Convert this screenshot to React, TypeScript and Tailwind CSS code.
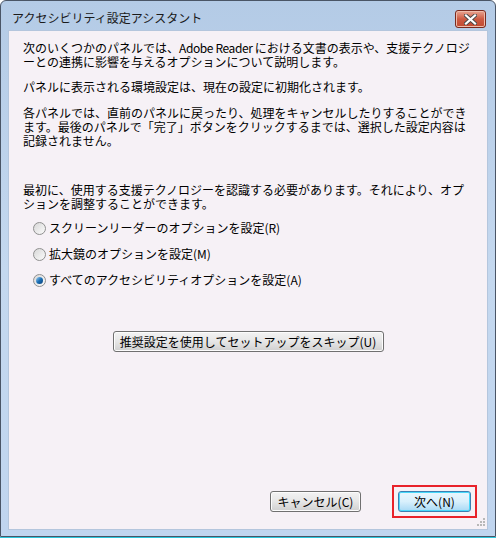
import React from "react";

const font = { fontFamily: '"Noto Sans CJK JP", "Noto Sans", sans-serif' };

const Radio = ({ checked, label }: { checked?: boolean; label: string }) => (
  <div className="flex items-center h-[14px]">
    <span className="w-[13px] h-[13px] rounded-full border border-[#8f8f8f] bg-gradient-to-br from-[#d8d8d8] to-[#fbfbfb] flex items-center justify-center">
      {checked && (
        <span className="w-[7px] h-[7px] rounded-full bg-gradient-to-br from-[#9bd3f4] via-[#1a6fb5] to-[#0d3f78]" />
      )}
    </span>
    <span className="ml-[3px] whitespace-nowrap">{label}</span>
  </div>
);

const Button = ({ children, className }: { children: React.ReactNode; className?: string }) => (
  <button
    className={`h-[21px] rounded-[3px] border border-[#707070] bg-gradient-to-b from-[#f3f3f3] via-[#e6e6e6] to-[#d0d0d0] text-[12px] leading-[14px] text-black flex items-center justify-center shadow-[inset_0_0_0_1px_#fcfcfc] ${className ?? ""}`}
    style={font}
  >
    {children}
  </button>
);

export default function App() {
  return (
    <div className="w-[496px] h-[538px] bg-white" style={font}>
      <div className="h-[537px] flex flex-col rounded-t-[6px] border border-[#4a5566] bg-gradient-to-b from-[#b4cbe6] via-[#c4d8ef] to-[#c0d5ef] overflow-hidden">
        {/* title bar */}
        <div className="h-[29px] flex items-start shrink-0">
          <div className="pl-[11px] pt-[9px] text-[12px] leading-[16px] text-[#1a1a1a] flex-1">アクセシビリティ設定アシスタント</div>
          <div className="mt-[9px] mr-[9px] w-[31px] h-[18px] rounded-[3px] border border-[#7a2a1e] bg-gradient-to-b from-[#e8a592] via-[#cd5a42] to-[#c04a30] flex items-center justify-center shadow-[inset_0_0_0_1px_#eebbaa]">
            <svg width="13" height="11" viewBox="0 0 13 11">
              <path d="M2 1.5 L11 9.5 M11 1.5 L2 9.5" stroke="#4a4a4a" strokeWidth="4" strokeLinecap="square" />
              <path d="M2 1.5 L11 9.5 M11 1.5 L2 9.5" stroke="#ffffff" strokeWidth="2.2" strokeLinecap="square" />
            </svg>
          </div>
        </div>

        {/* client area */}
        <div className="flex-1 mx-[7px] mb-[6px] bg-[#f6f1f6] border border-[#b4c6dd] relative flex flex-col text-[12px] leading-[14px] text-black">
          <div className="pl-[14px] pt-[10px]">
            <div className="whitespace-nowrap">
              次のいくつかのパネルでは、<span className="tracking-[-0.4px]">Adobe Reader </span>における文書の表示や、支援テクノロジ
            </div>
            <div className="whitespace-nowrap">ーとの連携に影響を与えるオプションについて説明します。</div>
            <div className="whitespace-nowrap mt-[11px]">パネルに表示される環境設定は、現在の設定に初期化されます。</div>
            <div className="whitespace-nowrap mt-[12px]">各パネルでは、直前のパネルに戻ったり、処理をキャンセルしたりすることができ</div>
            <div className="whitespace-nowrap">ます。最後のパネルで「完了」ボタンをクリックするまでは、選択した設定内容は</div>
            <div className="whitespace-nowrap">記録されません。</div>
            <div className="whitespace-nowrap mt-[35px]">最初に、使用する支援テクノロジーを認識する必要があります。それにより、オプ</div>
            <div className="whitespace-nowrap">ションを調整することができます。</div>
            <div className="pl-[10px] mt-[10px] flex flex-col gap-[12px]">
              <Radio label="スクリーンリーダーのオプションを設定(R)" />
              <Radio label="拡大鏡のオプションを設定(M)" />
              <Radio checked label="すべてのアクセシビリティオプションを設定(A)" />
            </div>
          </div>

          <div className="flex justify-center mt-[44px]">
            <Button className="w-[271px]">推奨設定を使用してセットアップをスキップ(U)</Button>
          </div>

          <div className="flex-1" />

          <div className="flex items-center justify-end pr-[12px] pb-[11px]">
            <Button className="w-[91px]">キャンセル(C)</Button>
            <div className="ml-[31px] p-[4px] border-2 border-[#e8222a] -mr-[2px]">
              <button
                className="w-[73px] h-[21px] rounded-[3px] border border-[#3c7fb1] bg-gradient-to-b from-[#eaf6fd] via-[#d9f0fc] to-[#a7d9f5] shadow-[inset_0_0_0_1px_#48d8fa] text-[12px] leading-[14px] text-black flex items-center justify-center"
                style={font}
              >
                次へ(N)
              </button>
            </div>
          </div>

          {/* size grip */}
          <svg className="absolute right-[2px] bottom-[2px]" width="10" height="10" viewBox="0 0 10 10">
            {[
              [8, 0], [8, 3], [5, 3], [8, 6], [5, 6], [2, 6],
            ].map(([x, y], i) => (
              <rect key={i} x={x} y={y + 1} width="2" height="2" fill="#b8b8b8" />
            ))}
          </svg>
        </div>
      </div>
      <div className="h-px bg-[#2cc6dc]" />
    </div>
  );
}
